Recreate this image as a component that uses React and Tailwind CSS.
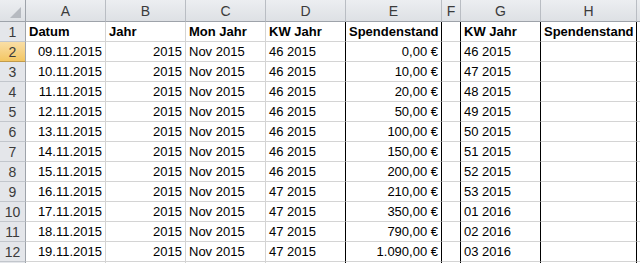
import React from 'react';

const cols = ['A', 'B', 'C', 'D', 'E', 'F', 'G', 'H'];
const widths = ['w-[80px]', 'w-[80px]', 'w-[80px]', 'w-[80px]', 'w-[96px]', 'w-[19px]', 'w-[80px]', 'w-[96px]'];

const kwList = ['46 2015', '47 2015', '48 2015', '49 2015', '50 2015', '51 2015', '52 2015', '53 2015', '01 2016', '02 2016', '03 2016'];
const amounts = ['0,00 €', '10,00 €', '20,00 €', '50,00 €', '100,00 €', '150,00 €', '200,00 €', '210,00 €', '350,00 €', '790,00 €', '1.090,00 €'];

const rows = amounts.map((amt, i) => {
  const day = String(9 + i).padStart(2, '0');
  return {
    datum: `${day}.11.2015`,
    jahr: '2015',
    mon: 'Nov 2015',
    kw: i < 7 ? '46 2015' : '47 2015',
    amt,
    kw2: kwList[i],
  };
});

// columns with a black right edge (D, E, F, G, H)
const blackRight = [false, false, false, true, true, true, true, true];

function Cell({ col, children, align = 'left', bold = false }) {
  const edge = blackRight[col] ? 'border-r-black' : 'border-r-[#d4d4d4]';
  return (
    <div
      className={`${widths[col]} shrink-0 h-full flex items-center border-r border-b border-b-[#d4d4d4] ${edge} px-[3px] overflow-hidden whitespace-nowrap ${
        align === 'right' ? 'justify-end' : 'justify-start'
      } ${bold ? 'font-bold' : ''}`}
    >
      {children}
    </div>
  );
}

function RowHead({ n, active }) {
  return (
    <div
      className={`w-[26px] shrink-0 h-full flex items-center justify-center border-r border-b border-r-[#9ea3aa] text-[14px] ${
        active
          ? 'bg-gradient-to-b from-[#f9dea5] to-[#f3c661] border-b-[#c29b4a] text-[#3b3b3b]'
          : 'bg-[#e4e6ea] border-b-[#c2c6cc] text-[#3b3b3b]'
      }`}
    >
      {n}
    </div>
  );
}

function DataRow({ n, children, active }) {
  return (
    <div className="flex h-[20px]">
      <RowHead n={n} active={active} />
      {children}
      <div className="flex-1 h-full border-b border-b-[#d4d4d4]" />
    </div>
  );
}

export default function App() {
  return (
    <div
      className="w-[640px] h-[263px] overflow-hidden bg-white text-black text-[13px] leading-none"
      style={{ fontFamily: '"Liberation Sans", Arial, sans-serif' }}
    >
      {/* column headers */}
      <div className="flex h-[22px] bg-gradient-to-b from-[#eceef1] to-[#dde0e4] text-[#3b3b3b] text-[14px]">
        <div className="relative w-[26px] shrink-0 h-full border-r border-b border-r-[#9ea3aa] border-b-[#9ea3aa]">
          <svg className="absolute left-[10px] top-[7px]" width="11" height="11" viewBox="0 0 11 11">
            <polygon points="11,0 11,11 0,11" fill="#b6bac0" />
          </svg>
        </div>
        {cols.map((c, i) => (
          <div
            key={c}
            className={`${widths[i]} shrink-0 h-full flex items-center justify-center border-r border-b border-r-[#b9bdc3] border-b-[#9ea3aa]`}
          >
            {c}
          </div>
        ))}
        <div className="flex-1 h-full border-b border-b-[#9ea3aa]" />
      </div>

      <DataRow n={1}>
        <Cell col={0} bold>Datum</Cell>
        <Cell col={1} bold>Jahr</Cell>
        <Cell col={2} bold>Mon Jahr</Cell>
        <Cell col={3} bold>KW Jahr</Cell>
        <Cell col={4} bold>Spendenstand</Cell>
        <Cell col={5} />
        <Cell col={6} bold>KW Jahr</Cell>
        <Cell col={7} bold>Spendenstand</Cell>
      </DataRow>

      {rows.map((r, i) => (
        <DataRow key={i} n={i + 2} active={i === 0}>
          <Cell col={0} align="right">{r.datum}</Cell>
          <Cell col={1} align="right">{r.jahr}</Cell>
          <Cell col={2}>{r.mon}</Cell>
          <Cell col={3}>{r.kw}</Cell>
          <Cell col={4} align="right">{r.amt}</Cell>
          <Cell col={5} />
          <Cell col={6}>{r.kw2}</Cell>
          <Cell col={7} />
        </DataRow>
      ))}

      {/* row 13, only its top edge is visible */}
      <DataRow n="">
        {cols.map((c, i) => (
          <Cell key={c} col={i} />
        ))}
      </DataRow>
    </div>
  );
}
